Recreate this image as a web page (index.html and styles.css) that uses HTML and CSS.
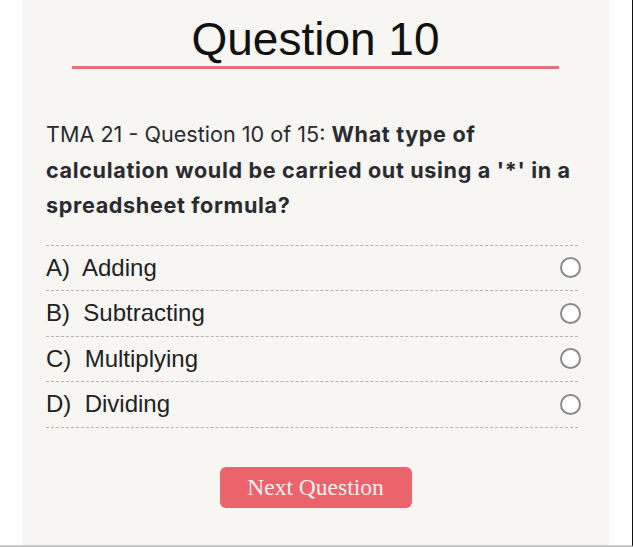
FILE: index.html
```html
<!DOCTYPE html>
<html lang="en">
	<head>
		<meta charset="UTF-8">
		<meta name="viewport" content="width=device-width, initial-scale=1.0">
		<title>Quiz</title>
		<link rel="stylesheet" href="styles.css">
	</head>

	<body>
		<div class="frame">
			<div class="quiz">
				<h1>Question 10</h1>
				<hr class="rule">

				<p class="question">TMA 21 - Question 10 of 15: <b>What type of calculation would be carried out using a '*' in a spreadsheet formula?</b></p>

				<ul class="answers">
					<li><label for="a">A)&nbsp; Adding</label><input type="radio" name="q10" id="a"></li>
					<li><label for="b">B)&nbsp; Subtracting</label><input type="radio" name="q10" id="b"></li>
					<li><label for="c">C)&nbsp; Multiplying</label><input type="radio" name="q10" id="c"></li>
					<li><label for="d">D)&nbsp; Dividing</label><input type="radio" name="q10" id="d"></li>
				</ul>

				<div class="next">
					<button>Next Question</button>
				</div>
			</div>
		</div>
	</body>
</html>
```

FILE: styles.css
```css
html, body {
	margin: 0;
	height: 100%;
	background-color: #fff;
}

.frame {
	height: 545px;
	border-right: 1px solid #111;
	border-bottom: 2px solid #c8c8c8;
	box-sizing: content-box;
	width: 632px;
}

.quiz {
	width: 587px;
	height: 100%;
	margin-left: 22px;
	background-color: #f7f6f2;
	box-sizing: border-box;
	padding: 13px 24px 0;
}

h1 {
	font-family: 'Liberation Sans', Arial, sans-serif;
	font-weight: normal;
	font-size: 46px;
	text-align: center;
	color: #111;
	margin: 0;
	line-height: 52px;
}

.rule {
	width: 487px;
	margin: 1px auto 0;
	border: none;
	height: 3px;
	background-color: #e8707a;
}

.question {
	font-family: Inter, 'Noto Sans', sans-serif;
	font-size: 21.6px;
	line-height: 35.5px;
	color: #2b2b2f;
	margin: 48px 0 0;
}

.question b {
	color: #2a2b30;
	letter-spacing: 0.65px;
}

.answers {
	list-style: none;
	padding: 0;
	margin: 21px 0 0;
	border-top: 1px dashed #b4b4b4;
	width: 532px;
}

.answers li {
	display: flex;
	align-items: center;
	justify-content: space-between;
	height: 44.5px;
	border-bottom: 1px dashed #b4b4b4;
	font-family: 'Liberation Sans', Arial, sans-serif;
	font-size: 24px;
	color: #222;
}

.answers input {
	appearance: none;
	width: 21px;
	height: 21px;
	border: 2px solid #8a8a8a;
	border-radius: 50%;
	margin: 0 -3px 0 0;
	background: #fff;
	box-sizing: border-box;
}

.next {
	text-align: center;
	margin-top: 39px;
}

.next button {
	font-family: 'Liberation Serif', 'Times New Roman', serif;
	font-size: 23.5px;
	color: #fdeff0;
	background-color: #eb646c;
	border: none;
	border-radius: 6px;
	width: 192px;
	height: 41px;
	padding: 0;
}
```
